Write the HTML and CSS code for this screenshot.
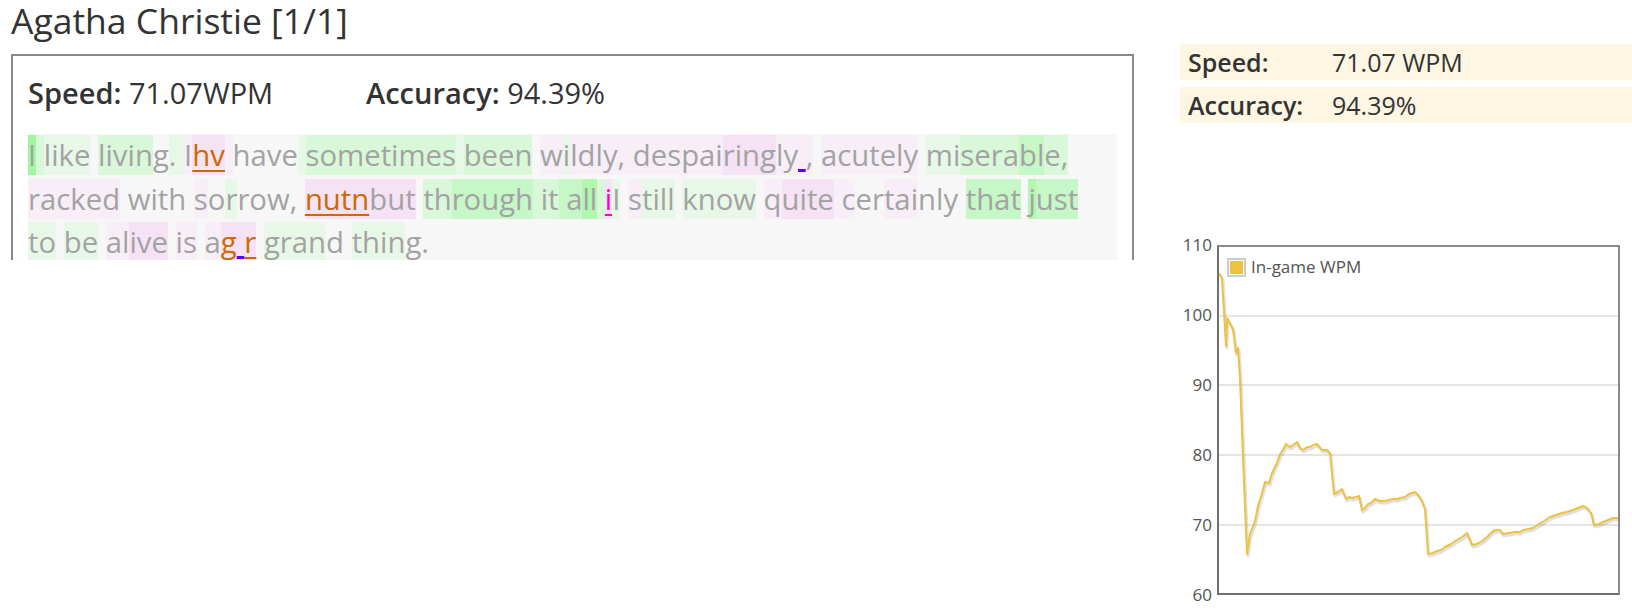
FILE: index.html
```
<!DOCTYPE html>
<html>
<head>
<meta charset="utf-8">
<link rel="stylesheet" href="styles.css">
</head>
<body>
<div class="page">
  <div class="left">
    <h1 class="title">Agatha Christie [1/1]</h1>
    <div class="box">
      <div class="stats">
        <span class="stat"><b>Speed:</b> 71.07WPM</span><span class="stat"><b>Accuracy:</b> 94.39%</span>
      </div>
      <div class="text"><span class="ge">I</span><span class="gb"> </span><span class="ga">like</span> <span class="gb">livin</span>g<span class="ga">. </span><span class="pa">I</span><span class="pb"><span class="err">hv</span></span><span class="pa"> </span>have<span class="ga"> </span><span class="gb">sometimes</span><span class="ga"> </span><span class="gb">been</span> <span class="pa">w</span><span class="ga">i</span><span class="pa">ldly, despai</span><span class="pb">ring</span><span class="pa">ly<span class="sp"> </span>,</span> <span class="pa">acutely</span> <span class="ga">mi</span><span class="gb">sera</span><span class="gc">bl</span><span class="gb">e,</span> <span class="pa">racked</span> with <span class="pa">s</span>o<span class="ga">r</span>row, <span class="pb"><span class="err">nutn</span>but</span> <span class="gb">th</span><span class="gc">rough</span><span class="gb"> it</span><span class="gc"> a</span><span class="gd">ll</span><span class="gb"> </span><span class="pb"><span class="err2">i</span></span><span class="ga">I</span> <span class="pa">s</span><span class="ga">till</span> <span class="ga">know</span> <span class="pa">q</span><span class="pb">uite</span><span class="pa"> c</span>er<span class="pa">tai</span>nly <span class="gc">that</span> <span class="gd">j</span><span class="gc">ust</span> <span class="ga">to</span> <span class="ga">be</span> <span class="pa">al</span><span class="pb">ive</span> <span class="pa">is</span> <span class="pa">a</span><span class="pb"><span class="err">g</span><span class="sp"> </span><span class="err">r</span></span> <span class="ga">gran</span>d <span class="ga">thin</span>g.</div>
    </div>
  </div>
  <div class="right">
    <div class="summary">
      <div class="row"><span class="label">Speed:</span><span class="value">71.07 WPM</span></div>
      <div class="row"><span class="label">Accuracy:</span><span class="value">94.39%</span></div>
    </div>
    <div class="chart">
      <div class="yaxis">
        <span>110</span><span>100</span><span>90</span><span>80</span><span>70</span><span>60</span>
      </div>
      <div class="plot">
        <svg class="plot-svg" width="399" height="346" viewBox="0 0 399 346">
          <g stroke="#dcdcdc" stroke-width="1.5">
            <line x1="0" y1="69" x2="399" y2="69"/>
            <line x1="0" y1="138" x2="399" y2="138"/>
            <line x1="0" y1="208" x2="399" y2="208"/>
            <line x1="0" y1="278" x2="399" y2="278"/>
          </g>
          <polyline class="shadow" points="0,26 3,31 7,99 8,71 14,82 17,106 19,101 21,131 23,184 25,234 28,307 31,287 36,274 39,259 43,246 46,235 50,236 53,226 58,216 61,207 64,203 67,197 71,200 74,198 78,195 81,201 84,203 88,200 91,200 94,198 98,197 103,203 108,203 111,206 115,247 119,245 123,242 127,252 130,250 133,251 137,250 140,249 143,263 146,261 149,257 152,256 156,252 161,254 166,254 170,253 174,252 178,252 181,251 186,250 190,247 196,245 200,249 203,254 206,262 209,307 214,306 218,304 222,303 226,300 232,297 238,293 243,290 248,286 253,298 258,297 263,294 268,290 274,284 277,283 281,283 284,287 290,286 296,285 301,285 304,283 309,282 314,281 320,277 325,274 331,270 337,268 343,266 348,265 354,263 359,261 364,259 368,261 372,266 375,278 380,277 384,275 389,273 394,271 399,271"/>
          <polyline class="line" points="0,26 3,31 7,99 8,71 14,82 17,106 19,101 21,131 23,184 25,234 28,307 31,287 36,274 39,259 43,246 46,235 50,236 53,226 58,216 61,207 64,203 67,197 71,200 74,198 78,195 81,201 84,203 88,200 91,200 94,198 98,197 103,203 108,203 111,206 115,247 119,245 123,242 127,252 130,250 133,251 137,250 140,249 143,263 146,261 149,257 152,256 156,252 161,254 166,254 170,253 174,252 178,252 181,251 186,250 190,247 196,245 200,249 203,254 206,262 209,307 214,306 218,304 222,303 226,300 232,297 238,293 243,290 248,286 253,298 258,297 263,294 268,290 274,284 277,283 281,283 284,287 290,286 296,285 301,285 304,283 309,282 314,281 320,277 325,274 331,270 337,268 343,266 348,265 354,263 359,261 364,259 368,261 372,266 375,278 380,277 384,275 389,273 394,271 399,271"/>
        </svg>
        <div class="legend"><span class="swatch"><span class="swatch-fill"></span></span><span class="legend-label">In-game WPM</span></div>
      </div>
    </div>
  </div>
</div>
</body>
</html>
```
FILE: styles.css
```
html, body {
  margin: 0;
  padding: 0;
  background: #fff;
}
body {
  font-family: "Open Sans", "Noto Sans", sans-serif;
  color: #333;
}
.page {
  display: flex;
  align-items: flex-start;
}
.left {
  width: 1123px;
  margin-left: 11px;
  flex: none;
}
.title {
  margin: 0 0 14px 0;
  font-size: 35.5px;
  font-weight: 400;
  line-height: 40px;
  color: #333;
}
.box {
  border: 2px solid #888;
  border-bottom: 0;
  height: 204px;
  overflow: hidden;
  padding: 0 15px 0 15px;
}
.stats {
  padding-top: 19px;
  font-size: 29px;
  line-height: 36px;
  white-space: nowrap;
}
.stat {
  display: inline-block;
  width: 338px;
}
.stat b {
  font-weight: 600;
}
.text {
  margin-top: 23px;
  background: #f7f7f7;
  font-size: 29.3px;
  line-height: 43.5px;
  color: #a3a3a3;
  height: 200px;
  padding-right: 20px;
}
.ga { background: #e8f8e8; }
.gb { background: #d9f8d9; }
.gc { background: #c6f7c6; }
.gd { background: #b2f6b2; }
.ge { background: #a2f5a2; }
.pa { background: #f8eef8; }
.pb { background: #f5e2f5; }
.pc { background: #f2d8f2; }
.err {
  color: #cc6a00;
  text-decoration: underline 2px #cc6a00;
  text-underline-offset: 4px;
}
.err2 {
  color: #ff00c8;
  text-decoration: underline 2px #ff00c8;
  text-underline-offset: 4px;
}
.sp {
  text-decoration: underline 3px #5a00ff;
  text-underline-offset: 3px;
}
.right {
  flex: 1;
  margin-left: 46px;
  padding-top: 44px;
}
.summary {
  display: flex;
  flex-direction: column;
  gap: 7px;
}
.row {
  display: flex;
  align-items: center;
  height: 36px;
  background: #fdf6e3;
  padding-left: 8px;
  font-size: 25px;
  color: #333;
}
.label {
  width: 144px;
  font-weight: 600;
}
.chart {
  display: flex;
  margin-top: 122px;
  margin-left: 0;
}
.yaxis {
  width: 32px;
  margin-top: -11px;
  height: 372px;
  display: flex;
  flex-direction: column;
  justify-content: space-between;
  align-items: flex-end;
  font-size: 17px;
  line-height: 22px;
  color: #545454;
  padding-right: 5px;
}
.plot {
  position: relative;
  width: 399px;
  height: 346px;
  border: 2px solid #707070;
  border-top-color: #8a8a8a;
  border-right-color: #8a8a8a;
}
.plot-svg {
  display: block;
}
.line {
  fill: none;
  stroke: #edc240;
  stroke-width: 2;
  stroke-linejoin: round;
}
.shadow {
  fill: none;
  stroke: rgba(0, 0, 0, 0.12);
  stroke-width: 3;
  stroke-linejoin: round;
  transform: translate(1px, 2px);
}
.legend {
  position: absolute;
  left: 8px;
  top: 9px;
  display: flex;
  align-items: center;
  gap: 5px;
}
.swatch {
  display: block;
  width: 13px;
  height: 13px;
  border: 2px solid #ccc;
  padding: 1px;
  background: #fff;
}
.swatch-fill {
  display: block;
  width: 13px;
  height: 13px;
  background: #edc240;
}
.legend-label {
  font-size: 17px;
  color: #545454;
  line-height: 22px;
}
```
